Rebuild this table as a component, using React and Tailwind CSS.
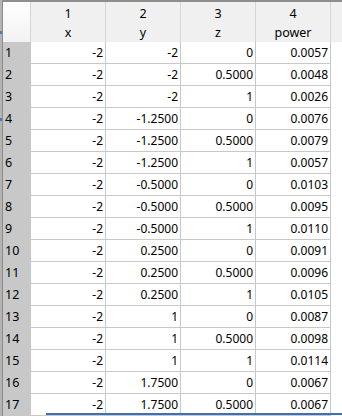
import React from "react";

const rows = [
  ["-2", "-2", "0", "0.0057"],
  ["-2", "-2", "0.5000", "0.0048"],
  ["-2", "-2", "1", "0.0026"],
  ["-2", "-1.2500", "0", "0.0076"],
  ["-2", "-1.2500", "0.5000", "0.0079"],
  ["-2", "-1.2500", "1", "0.0057"],
  ["-2", "-0.5000", "0", "0.0103"],
  ["-2", "-0.5000", "0.5000", "0.0095"],
  ["-2", "-0.5000", "1", "0.0110"],
  ["-2", "0.2500", "0", "0.0091"],
  ["-2", "0.2500", "0.5000", "0.0096"],
  ["-2", "0.2500", "1", "0.0105"],
  ["-2", "1", "0", "0.0087"],
  ["-2", "1", "0.5000", "0.0098"],
  ["-2", "1", "1", "0.0114"],
  ["-2", "1.7500", "0", "0.0067"],
  ["-2", "1.7500", "0.5000", "0.0067"],
];

const headers = [
  ["1", "x"],
  ["2", "y"],
  ["3", "z"],
  ["4", "power"],
];

export default function App() {
  return (
    <div
      className="relative w-[342px] h-[416px] overflow-hidden bg-white flex text-black"
      style={{ fontFamily: "'Noto Sans', 'Open Sans', sans-serif" }}
    >
      <div className="w-[3px] shrink-0 bg-[#b4b4b4] border-r border-[#8c8c8c] relative">
        <div className="absolute left-0 top-[31px] w-[2px] h-[3px] bg-[#4a7cc0]" />
        <div className="absolute left-0 top-[118px] w-[2px] h-[3px] bg-[#4a7cc0]" />
      </div>
      <div className="flex-1 flex flex-col">
        <div className="h-[2px] bg-[#8e8e8e]" />
        <div className="flex h-[40px] bg-[#f0f0f0]">
          <div className="w-[28px] shrink-0 border-r border-[#d4d4d4] bg-gradient-to-b from-white to-[#f2f2f2]" />
          {headers.map(([n, name]) => (
            <div
              key={n}
              className="w-[75px] shrink-0 border-r border-[#d6d6d6] flex flex-col items-center text-[12.5px] leading-[19px] pt-[2px]"
            >
              <span>{n}</span>
              <span>{name}</span>
            </div>
          ))}
          <div className="flex-1" />
        </div>
        {rows.map((r, i) => (
          <div key={i} className="flex h-[22px] shrink-0">
            <div className="w-[28px] shrink-0 bg-[#c8c8c8] text-[12.5px] leading-[21px] pl-[2px]">
              {i + 1}
            </div>
            {r.map((v, j) => (
              <div
                key={j}
                className="w-[75px] shrink-0 border-r border-b border-[#c8c8c8] text-right pr-[2px] text-[12px] leading-[21px]"
              >
                {v}
              </div>
            ))}
            <div className="flex-1" />
          </div>
        ))}
      </div>
      <div className="absolute left-[46px] right-0 top-[413px] h-[2px] bg-[#3f6fb5]" />
    </div>
  );
}
